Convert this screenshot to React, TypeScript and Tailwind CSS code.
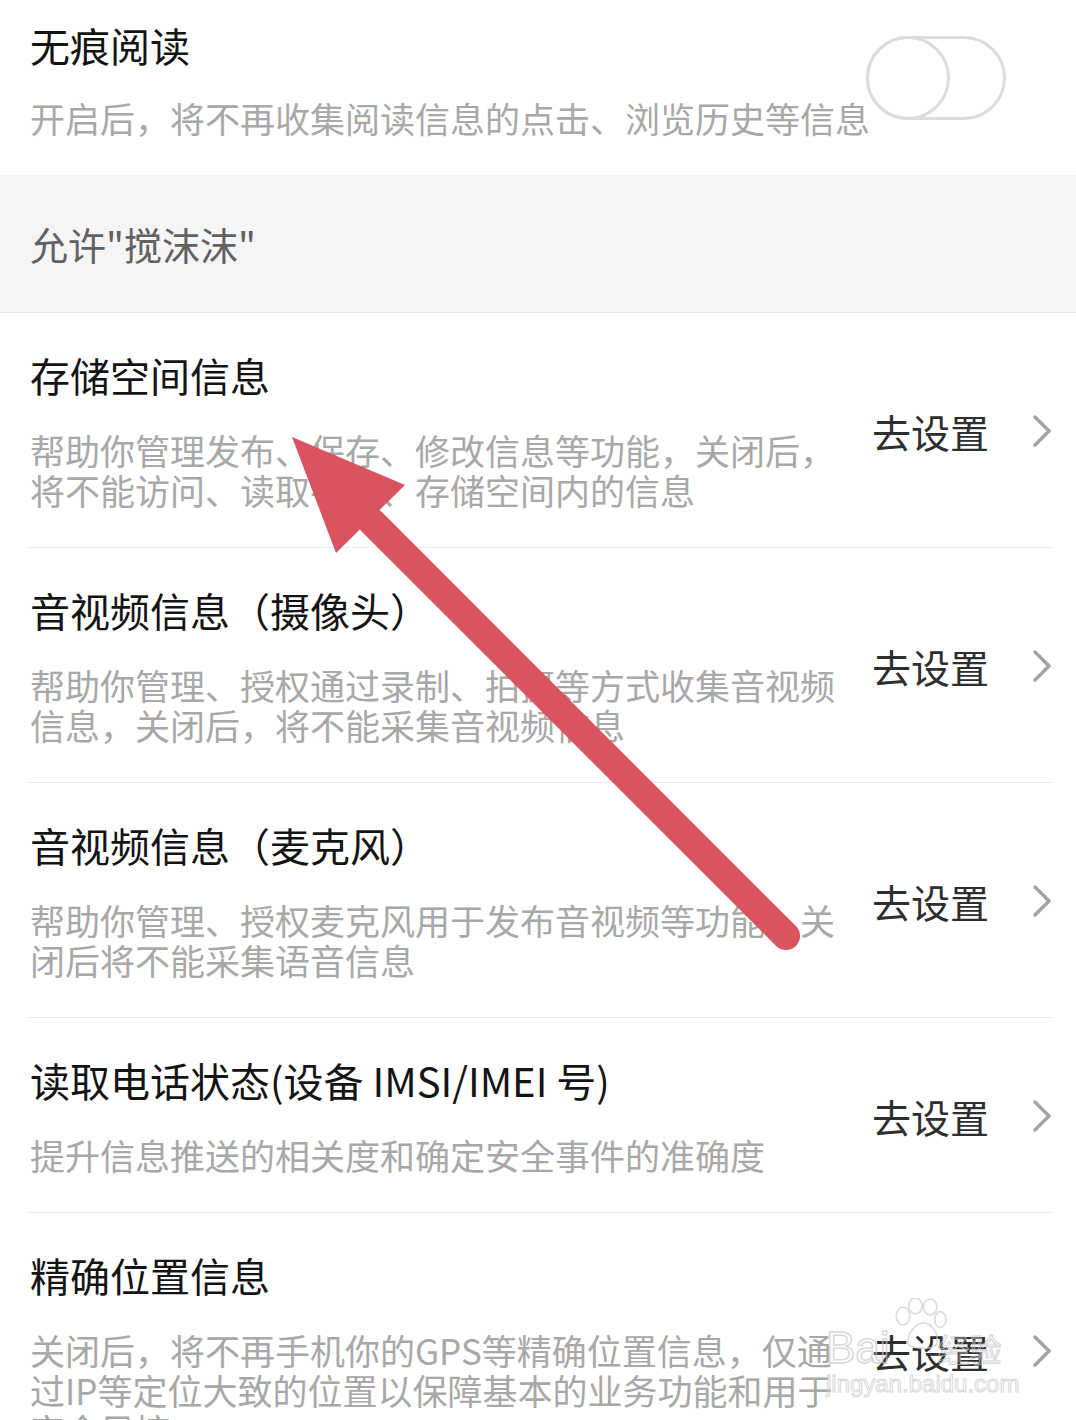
import React from "react";

interface Permission {
  title: string;
  desc: string;
}

const permissions: Permission[] = [
  {
    title: "存储空间信息",
    desc: "帮助你管理发布、保存、修改信息等功能，关闭后，将不能访问、读取手机、存储空间内的信息",
  },
  {
    title: "音视频信息（摄像头）",
    desc: "帮助你管理、授权通过录制、拍摄等方式收集音视频信息，关闭后，将不能采集音视频信息",
  },
  {
    title: "音视频信息（麦克风）",
    desc: "帮助你管理、授权麦克风用于发布音视频等功能，关闭后将不能采集语音信息",
  },
  {
    title: "读取电话状态(设备 IMSI/IMEI 号)",
    desc: "提升信息推送的相关度和确定安全事件的准确度",
  },
  {
    title: "精确位置信息",
    desc: "关闭后，将不再手机你的GPS等精确位置信息，仅通过IP等定位大致的位置以保障基本的业务功能和用于安全风控",
  },
];

function Chevron() {
  return (
    <svg width="18" height="32" viewBox="0 0 18 32" fill="none">
      <polyline
        points="2,2 16,16 2,30"
        stroke="#a3a3a3"
        strokeWidth="3.5"
        strokeLinecap="round"
        strokeLinejoin="round"
      />
    </svg>
  );
}

function Toggle() {
  return (
    <div className="mt-[15px] flex h-[84px] w-[140px] flex-none rounded-full border-[3px] border-[#dcdcdc]">
      <div className="-m-[3px] h-[84px] w-[84px] rounded-full border-[3px] border-[#dcdcdc] bg-white" />
    </div>
  );
}

function PermissionRow({ item, last }: { item: Permission; last: boolean }) {
  return (
    <div
      className={
        "ml-[28px] mr-[24px] flex items-center pl-[2px] pt-[38px] pb-[37px] " +
        (last ? "" : "border-b border-[#ececec]")
      }
    >
      <div className="w-[812px] flex-none">
        <p className="text-[40px] leading-[48px] text-[#141414]">{item.title}</p>
        <p className="mt-[31px] text-[35px] leading-[40px] text-[#a8a8a8]">{item.desc}</p>
      </div>
      <div className="ml-auto flex items-center gap-[44px] pr-[1px]">
        <span className="text-[39px] leading-[48px] text-[#2e2e2e]">去设置</span>
        <Chevron />
      </div>
    </div>
  );
}

function Arrow() {
  return (
    <svg
      className="pointer-events-none absolute left-0 top-0"
      width="1076"
      height="1420"
      viewBox="0 0 1076 1420"
    >
      <line
        x1="372"
        y1="522"
        x2="786"
        y2="936"
        stroke="#d9545f"
        strokeWidth="28"
        strokeLinecap="round"
      />
      <polygon points="292,437 336,553 405,485" fill="#d9545f" />
    </svg>
  );
}

function Watermark() {
  return (
    <div className="pointer-events-none absolute left-[826px] top-[1298px] flex flex-col font-['Liberation_Sans',sans-serif] opacity-70">
      <div className="flex items-end">
        <span className="text-[44px] leading-[40px] text-transparent [-webkit-text-stroke:1.5px_#c8c8c8]">
          Bai
        </span>
        <svg
          className="mb-[18px]"
          width="60"
          height="52"
          viewBox="0 0 50 46"
          fill="none"
          stroke="#cfcfcf"
          strokeWidth="1.5"
        >
          <ellipse cx="10" cy="16" rx="6" ry="8" />
          <ellipse cx="21" cy="7" rx="6" ry="7" />
          <ellipse cx="34" cy="8" rx="6" ry="7" />
          <ellipse cx="43" cy="19" rx="5" ry="7" />
          <path d="M14 40 C14 28 24 22 28 22 C34 22 42 30 40 40 C38 46 18 46 14 40 Z" />
        </svg>
        <span className="-ml-[12px] font-['Noto_Sans_CJK_SC',sans-serif] text-[32px] leading-[40px] text-transparent [-webkit-text-stroke:1.2px_#c8c8c8]">
          经验
        </span>
      </div>
      <span className="mt-[2px] text-[24px] leading-[28px] text-transparent [-webkit-text-stroke:1px_#c8c8c8]">
        jingyan.baidu.com
      </span>
    </div>
  );
}

export default function App() {
  return (
    <div className="relative h-[1420px] w-[1076px] overflow-hidden bg-white font-['Noto_Sans_CJK_SC','Noto_Sans',sans-serif]">
      <div className="flex px-[30px] pt-[21px] pb-[37px]">
        <div className="w-[836px] flex-none">
          <p className="text-[40px] leading-[48px] text-[#141414]">无痕阅读</p>
          <p className="mt-[29px] whitespace-nowrap text-[35px] leading-[40px] text-[#a8a8a8]">
            开启后，将不再收集阅读信息的点击、浏览历史等信息
          </p>
        </div>
        <Toggle />
      </div>

      <div className="flex h-[138px] items-center border-b border-[#e8e8e8] bg-[#f5f5f5] px-[30px]">
        <p className="text-[38px] leading-[48px] text-[#616161]">允许"搅沫沫"</p>
      </div>

      <div>
        {permissions.map((p, i) => (
          <PermissionRow key={p.title} item={p} last={i === permissions.length - 1} />
        ))}
      </div>

      <Watermark />
      <Arrow />
    </div>
  );
}
